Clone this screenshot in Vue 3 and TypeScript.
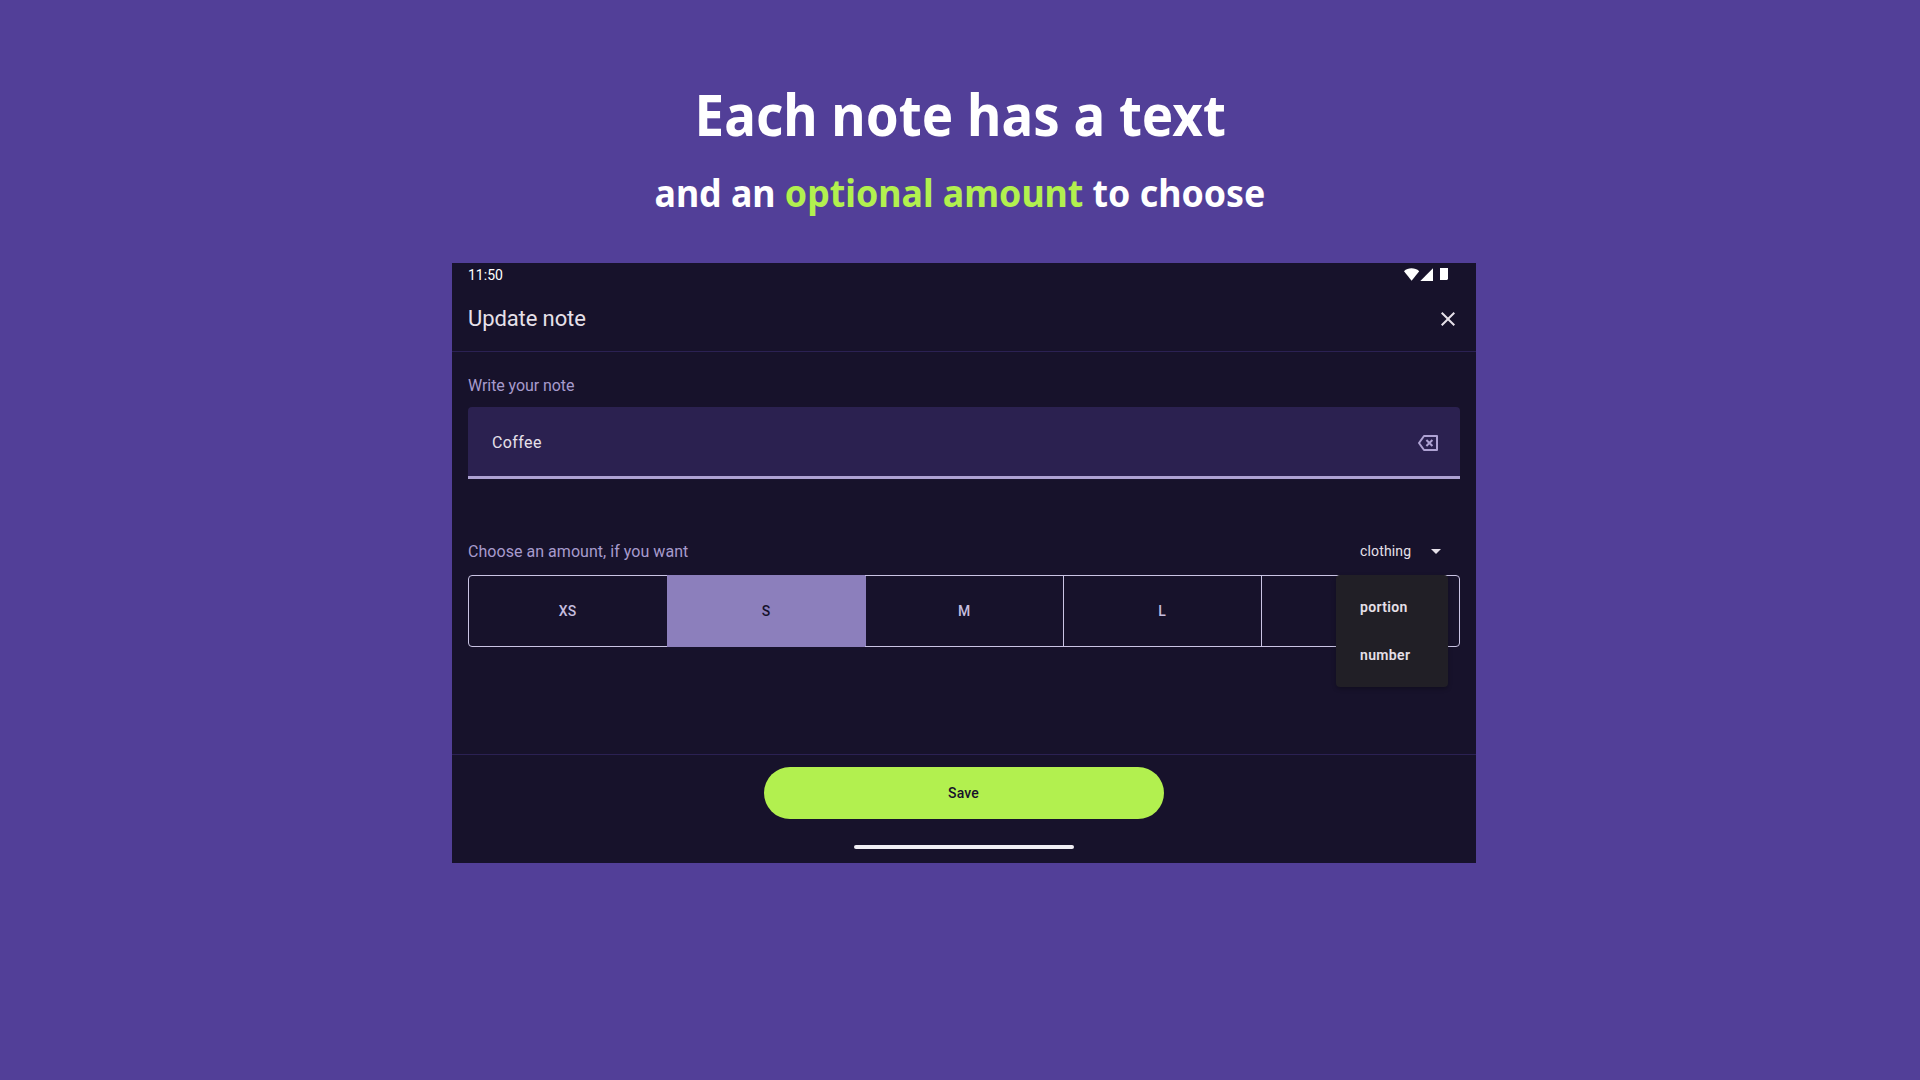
<script setup lang="ts">
import { ref } from 'vue'

const sizes: string[] = ['XS', 'S', 'M', 'L', '']
const selected = ref('S')
const units: string[] = ['portion', 'number']
const note = ref('Coffee')
</script>

<template>
  <main class="page">
    <h1 class="headline">Each note has a text</h1>
    <h2 class="subline">and an <em>optional amount</em> to choose</h2>

    <section class="device">
      <div class="status">
        <span>11:50</span>
        <svg class="status-icons" width="46" height="14" viewBox="0 0 46 14" fill="#fff">
          <path d="M0 3.2C4-.6 11-.6 15.200 3.200L7.600 12.800z" />
          <path d="M16.300 12.900L29 .3V12.900z" />
          <path d="M36 0h8v11l-1 1h-7z" />
        </svg>
      </div>

      <header class="bar">
        <span class="title">Update note</span>
        <svg width="24" height="24" viewBox="0 0 24 24" fill="#e6e0e9">
          <path d="M19 6.410L17.590 5 12 10.590 6.410 5 5 6.410 10.590 12 5 17.590 6.410 19 12 13.410 17.590 19 19 17.590 13.410 12z" />
        </svg>
      </header>

      <div class="content">
        <div class="label note-label">Write your note</div>
        <div class="field">
          <span>{{ note }}</span>
          <svg width="24" height="24" viewBox="0 0 24 24" fill="none" stroke="#aea2d3" stroke-width="2">
            <path d="M8 5H21V19H8L3 12z" stroke-linejoin="round" />
            <path d="M10.400 9l6 6M16.400 9l-6 6" />
          </svg>
        </div>

        <div class="amount-row">
          <span class="label amount-label">Choose an amount, if you want</span>
          <div class="select">
            <span>clothing</span>
            <svg width="24" height="24" viewBox="0 0 24 24" fill="#e6e0e9"><path d="M7 10l5 5 5-5z" /></svg>
            <div class="menu">
              <div v-for="u in units" :key="u" class="menu-item">{{ u }}</div>
            </div>
          </div>
        </div>

        <div class="segments">
          <div
            v-for="s in sizes"
            :key="s"
            class="segment"
            :class="{ active: s === selected }"
            @click="selected = s"
          >{{ s }}</div>
        </div>
      </div>

      <footer class="footer">
        <button class="save">Save</button>
        <div class="home"></div>
      </footer>
    </section>
  </main>
</template>

<style>
body {
  margin: 0;
  background: #523f98;
}
</style>

<style scoped>
.page {
  box-sizing: border-box;
  width: 1920px;
  height: 1080px;
  overflow: hidden;
  display: flex;
  flex-direction: column;
  align-items: center;
  background: #523f98;
  color: #fff;
  font-family: 'Noto Sans', sans-serif;
}
.headline {
  margin: 75px 0 0;
  font-size: 57px;
  line-height: 78px;
  font-weight: 700;
  white-space: nowrap;
  transform: scaleX(0.928);
}
.subline {
  margin: 13px 0 0;
  font-size: 38px;
  line-height: 52px;
  font-weight: 700;
  white-space: nowrap;
  transform: scaleX(0.94);
}
.subline em {
  font-style: normal;
  color: #b2f04f;
}
.device {
  display: flex;
  flex-direction: column;
  width: 1024px;
  height: 600px;
  margin: 45px 0 0 8px;
  background: #17122b;
  font-family: Roboto, sans-serif;
}
.status {
  display: flex;
  justify-content: space-between;
  height: 24px;
  padding: 0 26px 0 16px;
  font-size: 14px;
  line-height: 24px;
}
.status-icons {
  margin-top: 5px;
}
.bar {
  display: flex;
  align-items: center;
  justify-content: space-between;
  height: 64px;
  padding: 0 16px;
  border-bottom: 1px solid #2b2153;
  color: #e6e0e9;
}
.title {
  padding-bottom: 2px;
  font-size: 22px;
  letter-spacing: -0.1px;
}
.content {
  flex: 1;
  padding: 0 16px;
}
.label {
  font-size: 16px;
  color: #a79bcd;
}
.note-label {
  padding-top: 22px;
  height: 33px;
  line-height: 24px;
  letter-spacing: -0.07px;
}
.amount-label {
  letter-spacing: 0.04px;
}
.field {
  box-sizing: border-box;
  display: flex;
  align-items: center;
  justify-content: space-between;
  height: 72px;
  padding: 3px 20px 0 24px;
  border-bottom: 3px solid #aea2d3;
  border-radius: 4px 4px 0 0;
  background: #2b2150;
  color: #e6e0e9;
  font-size: 16px;
  letter-spacing: 0.4px;
}
.field span {
  padding-bottom: 2px;
}
.amount-row {
  display: flex;
  align-items: center;
  justify-content: space-between;
  margin-top: 48px;
  height: 48px;
}
.select {
  position: relative;
  box-sizing: border-box;
  display: flex;
  align-items: center;
  justify-content: space-between;
  width: 112px;
  height: 48px;
  margin-right: 12px;
  padding-left: 24px;
  color: #e6e0e9;
  font-size: 14px;
  letter-spacing: 0.15px;
}
.menu {
  position: absolute;
  top: 48px;
  left: 0;
  z-index: 2;
  box-sizing: border-box;
  width: 112px;
  height: 112px;
  padding: 8px 0;
  border-radius: 4px;
  background: #211f26;
  box-shadow: 0 2px 4px rgba(0, 0, 0, 0.25);
}
.menu-item {
  height: 48px;
  padding-left: 24px;
  line-height: 48px;
  font-weight: 600;
  letter-spacing: 0.35px;
}
.segments {
  box-sizing: border-box;
  display: flex;
  height: 72px;
  border: 1px solid #cac4e4;
  border-radius: 4px;
}
.segment {
  box-sizing: border-box;
  flex: 1 1 0;
  display: flex;
  align-items: center;
  justify-content: center;
  padding-right: 1px;
  color: #c5bddf;
  font-size: 14px;
  font-weight: 500;
}
.segment + .segment {
  border-left: 1px solid #cac4e4;
}
.segment:first-child {
  flex: 0 0 198px;
}
.segment.active {
  flex: 0 0 198px;
  margin: -1px 0;
  border-color: #8c7fbc;
  background: #8c7fbc;
  color: #17122b;
}
.segment.active + .segment {
  border-color: #8c7fbc;
}
.footer {
  display: flex;
  flex-direction: column;
  align-items: center;
  height: 108px;
  border-top: 1px solid #2b2153;
}
.save {
  width: 400px;
  height: 52px;
  margin: 12px 0 26px;
  padding: 0 1px 0 0;
  border: 0;
  border-radius: 26px;
  background: #b2f04f;
  color: #17122b;
  font: 500 14px Roboto, sans-serif;
  letter-spacing: 0.2px;
}
.home {
  width: 220px;
  height: 4px;
  border-radius: 2px;
  background: #f0eef4;
}
</style>
